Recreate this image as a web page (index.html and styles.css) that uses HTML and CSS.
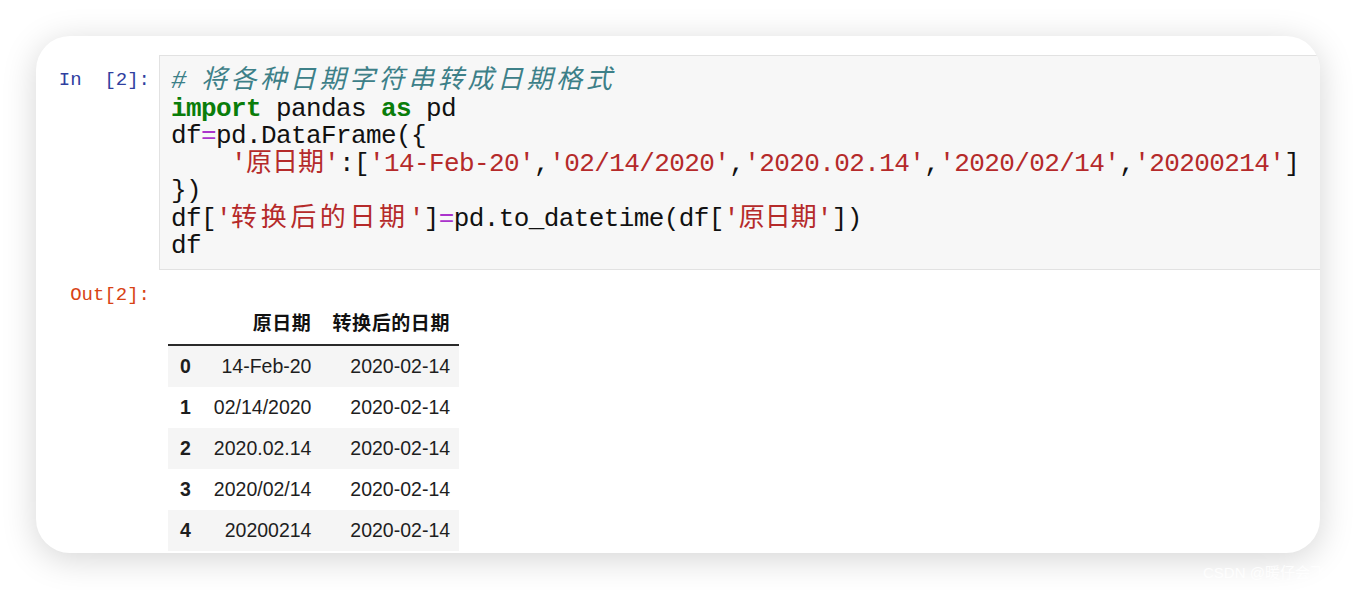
FILE: index.html
```html
<!DOCTYPE html>
<html lang="zh">
<head>
<meta charset="utf-8">
<link rel="stylesheet" href="styles.css">
</head>
<body>
<div class="page">
  <div class="card">
    <div class="cell-in">
      <div class="prompt in-prompt">In&nbsp;&nbsp;[2]:</div>
      <div class="code">
        <div class="line"><span class="c"># <span class="zh">将各种日期字符串转成日期格式</span></span></div>
        <div class="line"><span class="k">import</span> pandas <span class="k">as</span> pd</div>
        <div class="line">df<span class="o">=</span>pd.DataFrame({</div>
        <div class="line">    <span class="s">'<span class="zh narrow">原日期</span>'</span>:[<span class="s">'14-Feb-20'</span>,<span class="s">'02/14/2020'</span>,<span class="s">'2020.02.14'</span>,<span class="s">'2020/02/14'</span>,<span class="s">'20200214'</span>]</div>
        <div class="line">})</div>
        <div class="line">df[<span class="s">'<span class="zh">转换后的日期</span>'</span>]<span class="o">=</span>pd.to_datetime(df[<span class="s">'<span class="zh narrow">原日期</span>'</span>])</div>
        <div class="line">df</div>
      </div>
    </div>
    <div class="cell-out">
      <div class="prompt out-prompt">Out[2]:</div>
      <div class="output">
        <table class="df">
          <thead>
            <tr><th></th><th class="zh-h">原日期</th><th class="zh-h">转换后的日期</th></tr>
          </thead>
          <tbody>
            <tr><th>0</th><td>14-Feb-20</td><td>2020-02-14</td></tr>
            <tr><th>1</th><td>02/14/2020</td><td>2020-02-14</td></tr>
            <tr><th>2</th><td>2020.02.14</td><td>2020-02-14</td></tr>
            <tr><th>3</th><td>2020/02/14</td><td>2020-02-14</td></tr>
            <tr><th>4</th><td>20200214</td><td>2020-02-14</td></tr>
          </tbody>
        </table>
      </div>
    </div>
  </div>
  <div class="watermark">CSDN @暖仔会飞</div>
</div>
</body>
</html>
```
FILE: styles.css
```css
html, body {
  margin: 0;
  padding: 0;
  background: #ffffff;
}
.page {
  position: relative;
  width: 1356px;
  height: 590px;
  box-sizing: border-box;
  padding: 36px 36px 37px 36px;
  overflow: hidden;
}
.card {
  height: 517px;
  background: #ffffff;
  border-radius: 34px;
  overflow: hidden;
  box-shadow: 0 6px 34px rgba(0, 0, 0, 0.17);
  padding-top: 19px;
  box-sizing: border-box;
}
.cell-in {
  display: flex;
}
.prompt {
  width: 123px;
  flex: none;
  box-sizing: border-box;
  padding-right: 9px;
  text-align: right;
  font-family: "Liberation Mono", monospace;
  font-size: 19px;
  white-space: pre;
}
.in-prompt {
  color: #303f9f;
  padding-top: 12px;
  line-height: 26px;
}
.code {
  flex: 1;
  background: #f7f7f7;
  border: 1px solid #e2e2e2;
  border-right: none;
  padding: 12px 11px 8px 11px;
  font-family: "Liberation Mono", monospace;
  font-size: 26px;
  letter-spacing: -0.6px;
  color: #111111;
}
.line {
  height: 27.5px;
  line-height: 27.5px;
  white-space: pre;
}
.zh {
  font-family: "Noto Sans CJK SC", sans-serif;
  font-size: 26px;
  line-height: 0;
  letter-spacing: 3.6px;
  font-weight: 400;
}
.zh.narrow {
  letter-spacing: 0px;
}
.c {
  color: #3d8088;
  font-style: italic;
}
.k {
  color: #0a7d0a;
  font-weight: bold;
}
.s {
  color: #b52a2a;
}
.o {
  color: #aa33cc;
}
.cell-out {
  display: flex;
  margin-top: 13px;
}
.out-prompt {
  color: #d84315;
  line-height: 24px;
}
.output {
  padding-left: 9px;
  padding-top: 20px;
}
.df {
  border-collapse: collapse;
  font-family: "Liberation Sans", "Noto Sans CJK SC", sans-serif;
  font-size: 19.5px;
  color: #1e1e1e;
}
.df th, .df td {
  text-align: right;
  padding: 0 9px 0 12px;
  height: 41px;
  white-space: nowrap;
}
.df thead th {
  height: 42px;
  padding-bottom: 4px;
  box-sizing: border-box;
  border-bottom: 2px solid #2a2a2a;
  font-weight: bold;
}
.df .zh-h {
  font-family: "Noto Sans CJK SC", sans-serif;
  font-weight: 700;
  font-size: 19px;
  letter-spacing: 0.6px;
  color: #111111;
}
.df tbody th {
  font-weight: bold;
  padding: 0 11px 0 12px;
}
.df tbody tr:nth-child(odd) {
  background: #f5f5f5;
}
.watermark {
  position: absolute;
  left: 1203px;
  top: 561px;
  font-family: "Liberation Sans", "Noto Sans CJK SC", sans-serif;
  font-size: 15px;
  color: rgba(255, 255, 255, 0.85);
  white-space: nowrap;
}
```
